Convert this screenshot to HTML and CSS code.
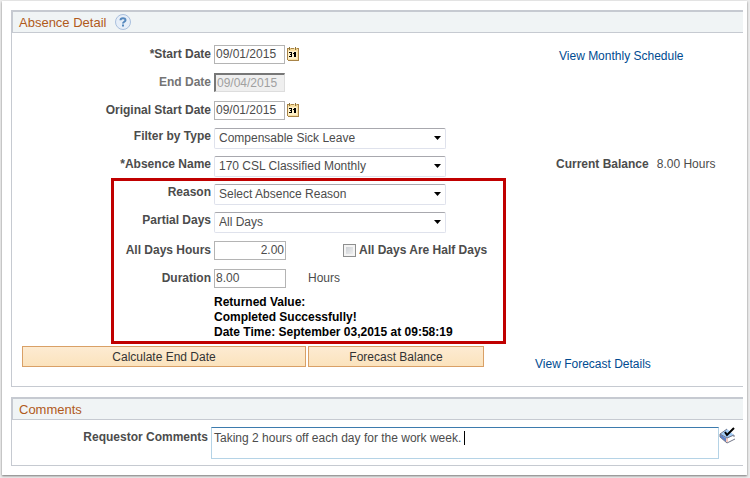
FILE: index.html
```html
<!DOCTYPE html>
<html lang="en">
<head>
  <meta charset="utf-8">
  <title>Absence Detail</title>
  <meta name="viewport" content="width=device-width, initial-scale=1">
  <link rel="stylesheet" href="styles.css">
</head>
<body>
<svg class="defs" width="0" height="0" aria-hidden="true">
  <symbol id="calendar" viewBox="0 0 12 14" shape-rendering="crispEdges">
    <path fill="#f8dfa2" d="M0 1h12v12h-12z"/>
    <path fill="#fdf0c8" d="M1 4h9v8h-9z"/>
    <path fill="#a88448" d="M0 1h1v12h-1zM11 1h1v13h-1zM1 13h10v1h-10zM1 1h1v1h-1zM4 1h3v1h-3zM9 1h2v1h-2z"/>
    <path fill="#8a7444" d="M2 0h1v3h-1zM8 0h1v3h-1z"/>
    <path fill="#e8c67c" d="M3 1h1v2h-1zM9 1h1v2h-1z"/>
    <path fill="#000" d="M2 5h3v1h-3zM4 6h1v1h-1zM3 7h2v1h-2zM4 8h1v1h-1zM2 9h3v1h-3zM7 5h2v5h-2zM6 6h1v1h-1z"/>
  </symbol>
</svg>
<div class="window">
  <form class="panel">
    <div class="panel-head">
      <h2>Absence Detail</h2>
      <button type="button" class="help" aria-label="Help">
        <svg width="16" height="16" viewBox="0 0 16 16">
          <circle cx="8" cy="8" r="7.500" fill="#e6eef8" stroke="#a9bfdd"/>
          <path d="M5.500 6.300 C5.500 3.500 10.500 3.500 10.500 6.200 C10.500 7.800 8 7.800 8 9.600" fill="none" stroke="#5588bd" stroke-width="2"/>
          <path d="M7 10.600h2v2h-2z" fill="#5588bd"/>
        </svg>
      </button>
    </div>
    <div class="panel-body">
      <div class="row">
        <label for="startDate">*Start Date</label>
        <div class="field">
          <input type="text" id="startDate" class="date" value="09/01/2015">
          <button type="button" class="pick" aria-label="Choose start date"><svg width="12" height="14"><use href="#calendar"/></svg></button>
        </div>
        <div class="side side-link"><a href="#">View Monthly Schedule</a></div>
      </div>
      <div class="row">
        <label for="endDate" class="off">End Date</label>
        <div class="field">
          <input type="text" id="endDate" class="date" value="09/04/2015" disabled>
        </div>
      </div>
      <div class="row">
        <label for="origDate">Original Start Date</label>
        <div class="field">
          <input type="text" id="origDate" class="date" value="09/01/2015">
          <button type="button" class="pick" aria-label="Choose original start date"><svg width="12" height="14"><use href="#calendar"/></svg></button>
        </div>
      </div>
      <div class="row row-select">
        <label for="filterType">Filter by Type</label>
        <div class="field">
          <select id="filterType"><option>Compensable Sick Leave</option></select>
        </div>
      </div>
      <div class="row row-select">
        <label for="absenceName">*Absence Name</label>
        <div class="field">
          <select id="absenceName"><option>170 CSL Classified Monthly</option></select>
        </div>
        <div class="side"><b>Current Balance</b><span>8.00 Hours</span></div>
      </div>
      <div class="marked">
        <div class="row row-select">
          <label for="reason">Reason</label>
          <div class="field">
            <select id="reason"><option>Select Absence Reason</option></select>
          </div>
        </div>
        <div class="row row-select">
          <label for="partialDays">Partial Days</label>
          <div class="field">
            <select id="partialDays"><option>All Days</option></select>
          </div>
        </div>
        <div class="row">
          <label for="allHours">All Days Hours</label>
          <div class="field">
            <input type="text" id="allHours" class="num right" value="2.00">
            <span class="half">
              <input type="checkbox" id="halfDays">
              <label for="halfDays">All Days Are Half Days</label>
            </span>
          </div>
        </div>
        <div class="row">
          <label for="duration">Duration</label>
          <div class="field">
            <input type="text" id="duration" class="num" value="8.00">
            <span class="unit">Hours</span>
          </div>
        </div>
        <p class="result">Returned Value:<br>Completed Successfully!<br>Date Time: September 03,2015 at 09:58:19</p>
      </div>
      <div class="actions">
        <button type="button" class="btn calc">Calculate End Date</button>
        <button type="button" class="btn forecast">Forecast Balance</button>
        <a href="#">View Forecast Details</a>
      </div>
    </div>
  </form>

  <form class="panel">
    <div class="panel-head">
      <h2>Comments</h2>
    </div>
    <div class="comments">
      <label for="comments">Requestor Comments</label>
      <div class="comment-box">
        <textarea id="comments">Taking 2 hours off each day for the work week.</textarea>
        <i class="caret"></i>
      </div>
      <button type="button" class="spell" aria-label="Spell check">
        <svg width="17" height="17" viewBox="0 0 17 17">
          <path d="M1 7 L8 2 L15 8 L8 12z" fill="#a3cdf7"/>
          <path d="M1 7 L8 12 L8 16 L1 10z" fill="#5d83cc"/>
          <path d="M8 12 L15 8 L15 12 L8 16z" fill="#fff"/>
          <path d="M7 11h2v4h-2z" fill="#f6c9c0"/>
          <path d="M8 2 L1 7 V10 L8 16 L16 12 M1 7 L8 11 L15 8 M15 8 L15 10" fill="none" stroke="#74788a"/>
          <path d="M6 5 L8 8 L15 1" fill="none" stroke="#000" stroke-width="2"/>
        </svg>
      </button>
    </div>
  </form>
</div>
</body>
</html>
```
FILE: styles.css
```css
* {
  box-sizing: border-box;
}
body {
  margin: 0;
  padding: 1px 3px 3px 2px;
  background-color: #ececec;
  font-family: Arial, "Liberation Sans", sans-serif;
  font-size: 12px;
  color: #4c4c4c;
}
.defs {
  position: absolute;
}
.window {
  padding: 9px 4px 9px 9px;
  background-color: #fff;
  box-shadow: 0 1px 2px #777;
}
.panel {
  border: 1px solid #c6cad1;
  border-top-width: 2px;
  border-right: none;
}
.panel + .panel {
  margin-top: 10px;
}
.panel-head {
  display: flex;
  align-items: center;
  gap: 9px;
  height: 21px;
  padding-left: 6px;
  border-left: 1px solid #c6cad1;
  border-bottom: 1px solid #c6cad1;
  background-color: #f0f4f5;
}
h2 {
  margin: 0;
  font-size: 13px;
  font-weight: normal;
  color: #b05a1c;
}
button,
input,
select,
textarea {
  font-family: inherit;
  font-size: 12px;
  color: #4c4c4c;
}
.help,
.pick,
.spell {
  display: flex;
  padding: 0;
  border: none;
  background: none;
}
a {
  color: #004b91;
  text-decoration: none;
}
.panel-body {
  padding: 7px 0 15px;
}
.row {
  display: grid;
  grid-template-columns: 199px 339px 1fr;
  column-gap: 3px;
  align-items: center;
  height: 28px;
}
label {
  font-weight: bold;
}
.row > label {
  text-align: right;
}
.row-select > label,
.row-select b {
  padding-bottom: 4px;
}
.off {
  color: #747474;
}
.field {
  display: flex;
  align-items: center;
}
input[type="text"] {
  height: 19px;
  margin: 0;
  padding: 0 1px;
  border: 1px solid #b4b4b4;
  background-color: #fff;
}
input.date {
  width: 71px;
}
input.num {
  width: 72px;
}
.right {
  text-align: right;
}
input[type="text"]:disabled {
  border-color: #777 #ddd #ddd #777;
  border-width: 2px 1px 1px 2px;
  background-color: #efefef;
  color: #a0a0a0;
}
.pick {
  margin-left: 2px;
}
select {
  width: 232px;
  height: 21px;
  padding: 0 4px;
  border: 1px solid #dfe2ec;
  border-top-color: #a8a8ae;
  border-radius: 2px;
  appearance: none;
  background: #fff url("data:image/svg+xml,%3Csvg xmlns='http://www.w3.org/2000/svg' width='7' height='4'%3E%3Cpath d='M0 0h7L3.500 4z'/%3E%3C/svg%3E") no-repeat right 4px center;
}
.side {
  display: flex;
  gap: 8px;
}
.side-link {
  padding: 3px 0 0 3px;
}
.half {
  display: flex;
  align-items: center;
  gap: 3px;
  margin-left: 57px;
}
input[type="checkbox"] {
  width: 13px;
  height: 13px;
  margin: 0;
  border: 1px solid #8e8f8f;
  appearance: none;
  background: linear-gradient(135deg, #c4c8cd, #f6f6f6);
  box-shadow: inset 0 0 0 2px #f4f4f4;
}
.unit {
  margin-left: 22px;
}
/* red frame drawn round the part-day fields */
.marked {
  position: relative;
}
.marked::before {
  content: "";
  position: absolute;
  top: -2px;
  bottom: -4px;
  left: 99px;
  width: 389px;
  border: 3px solid #c00000;
  pointer-events: none;
}
.result {
  margin: 3px 0 0 202px;
  font-weight: bold;
  line-height: 15px;
  color: #000;
}
.actions {
  display: flex;
  align-items: flex-start;
  gap: 2px;
  margin-top: 6px;
  padding-left: 10px;
}
.btn {
  height: 21px;
  padding: 0;
  border: 1px solid #d9a066;
  background: linear-gradient(#fdebd2, #fbe3bd);
  color: #333;
}
.calc {
  width: 284px;
}
.forecast {
  width: 176px;
}
.actions a {
  margin: 11px 0 0 49px;
}
.comments {
  display: grid;
  grid-template-columns: 196px 1fr 21px;
  column-gap: 3px;
  align-items: start;
  padding: 7px 0 6px;
}
.comments label {
  padding-top: 3px;
  text-align: right;
}
.comment-box {
  position: relative;
}
textarea {
  display: block;
  width: 100%;
  height: 32px;
  padding: 3px 2px;
  border: 1px solid #b5d3e6;
  border-top-color: #3d7bad;
  resize: none;
}
.caret {
  position: absolute;
  top: 4px;
  left: 253px;
  height: 14px;
  border-left: 1px solid #000;
}
.spell {
  margin-left: -3px;
}
```
